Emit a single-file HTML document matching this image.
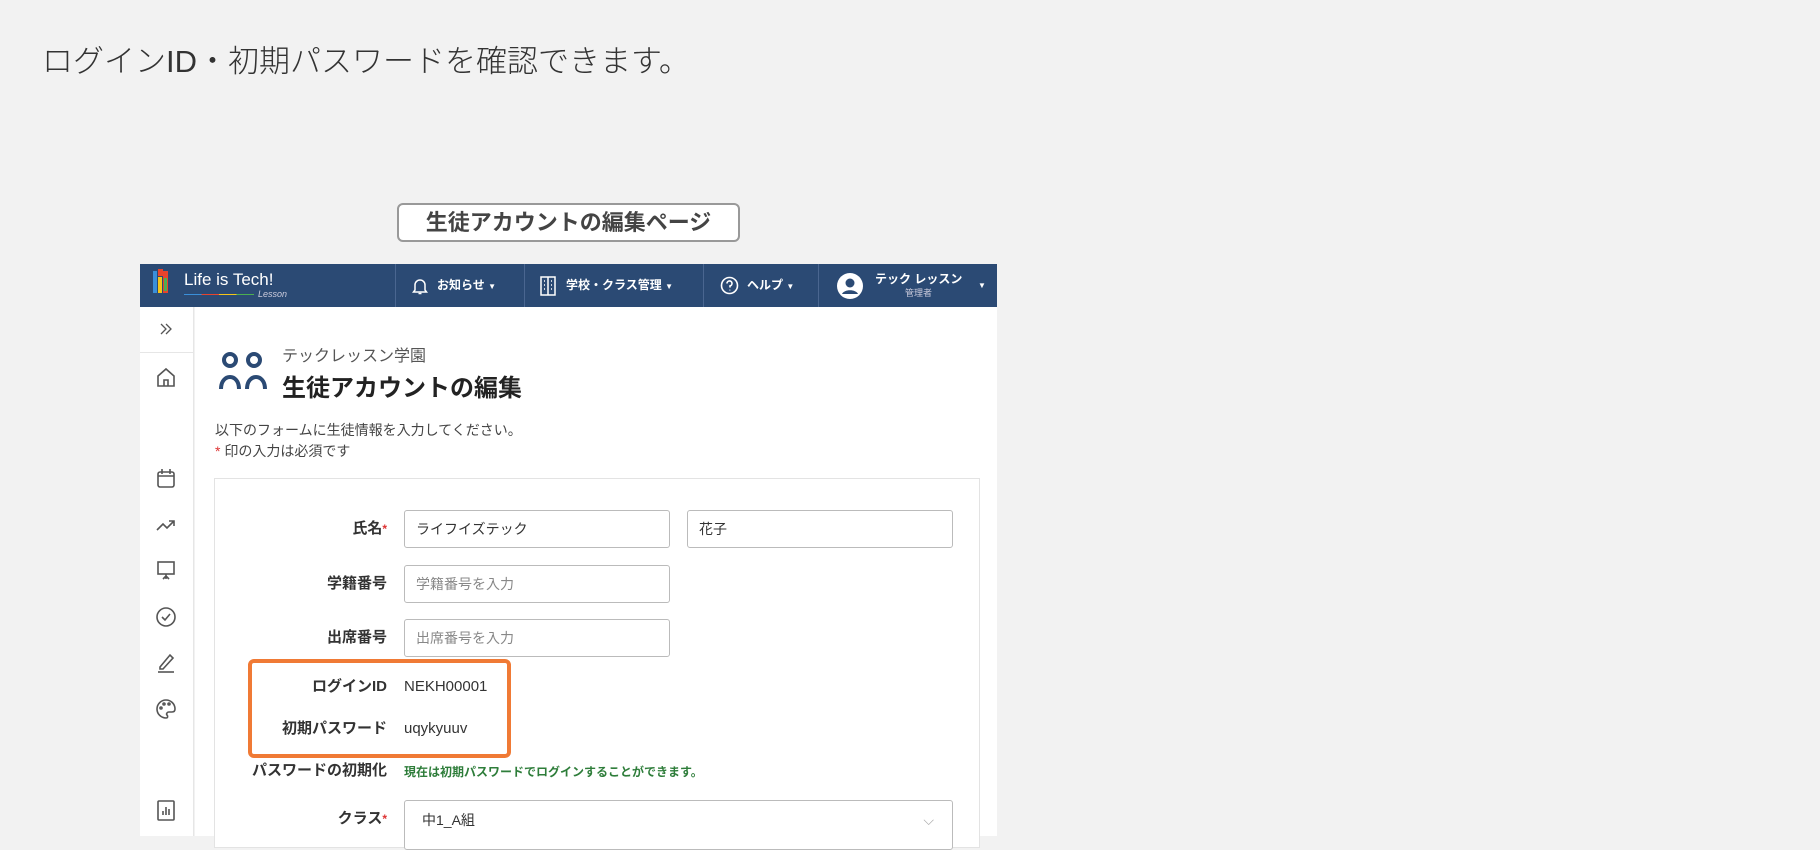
<!DOCTYPE html>
<html><head><meta charset="utf-8"><style>
*{box-sizing:border-box;margin:0;padding:0}
body{width:1820px;height:836px;background:#f2f2f2;font-family:"Liberation Sans","Noto Sans CJK JP",sans-serif;position:relative;overflow:hidden;color:#333}
.abs{position:absolute}
.h1{left:42px;top:36px;font-size:31px;color:#333;font-weight:300;white-space:nowrap}
.tag{left:397px;top:203px;width:343px;height:39px;border:2px solid #999;border-radius:6px;background:#fff;font-size:22px;font-weight:bold;color:#444;text-align:center;line-height:35px}
.nav{left:140px;top:264px;width:857px;height:43px;background:#2b4a74;color:#fff}
.sep{position:absolute;top:0;width:1px;height:43px;background:#4a6690}
.ni{position:absolute;top:0;height:43px;line-height:43px;font-size:12px;font-weight:bold;white-space:nowrap}
.side{left:140px;top:307px;width:54px;height:529px;background:#fff;border-right:1px solid #e6e6e6}
.main{left:195px;top:307px;width:802px;height:529px;background:#fff}
.card{left:214px;top:478px;width:766px;height:370px;border:1px solid #e3e3e3;background:#fff}
.lab{position:absolute;right:1433px;font-size:15px;line-height:20px;font-weight:bold;color:#333;white-space:nowrap;text-align:right}
.val{position:absolute;left:404px;font-size:15px;line-height:20px}
.inp{position:absolute;height:38px;border:1px solid #bbb;border-radius:3px;font-size:14px;line-height:36px;padding-left:11px;color:#333;background:#fff}
.ph{color:#888}
.req{color:#d33;font-size:12px;vertical-align:top}
svg.ic{position:absolute;left:155px}
</style></head><body>
<div class="abs h1">ログインID・初期パスワードを確認できます。</div>
<div class="abs tag">生徒アカウントの編集ページ</div>

<div class="abs nav">
 <svg class="abs" style="left:13px;top:5px" width="16" height="25" viewBox="0 0 16 25"><rect x="0" y="2" width="4" height="22" fill="#3a8fd9"/><rect x="5" y="0" width="5" height="7" fill="#e8442d"/><rect x="5" y="8" width="4" height="16" fill="#f5c518"/><rect x="10" y="2" width="5" height="22" fill="#e8442d"/><rect x="11" y="9" width="3" height="13" fill="#4caf50"/></svg>
 <div class="abs" style="left:44px;top:5px;font-size:17px;line-height:22px">Life is Tech!</div>
 <div class="abs" style="left:44px;top:30px;width:70px;height:1px;background:linear-gradient(90deg,#3a8fd9 25%,#e8442d 25% 50%,#f5c518 50% 75%,#4caf50 75%)"></div>
 <div class="abs" style="left:118px;top:25px;font-size:9px;font-style:italic;color:#ccd">Lesson</div>
 <div class="sep" style="left:255px"></div><div class="sep" style="left:384px"></div><div class="sep" style="left:563px"></div><div class="sep" style="left:678px"></div>
 <svg class="abs" style="left:272px;top:13px" width="16" height="18" viewBox="0 0 16 18" fill="none" stroke="#fff" stroke-width="1.5"><path d="M3 13V8a5 5 0 0 1 10 0v5l1.5 2h-13z"/><path d="M6.5 16.5h3"/></svg>
 <div class="ni" style="left:297px">お知らせ <span style="font-size:8px">▼</span></div>
 <svg class="abs" style="left:400px;top:12px" width="16" height="20" viewBox="0 0 16 20" fill="none" stroke="#fff" stroke-width="1.5"><rect x="1" y="1" width="14" height="18"/><path d="M8 1v18M4 5h1M4 9h1M4 13h1M11 5h1M11 9h1M11 13h1"/></svg>
 <div class="ni" style="left:426px">学校・クラス管理 <span style="font-size:8px">▼</span></div>
 <svg class="abs" style="left:580px;top:12px" width="19" height="19" viewBox="0 0 19 19" fill="none" stroke="#fff" stroke-width="1.6"><circle cx="9.5" cy="9.5" r="8"/><path d="M7 7.5a2.5 2.5 0 1 1 3 2.4v1.6M9.8 13.8v.6"/></svg>
 <div class="ni" style="left:607px">ヘルプ <span style="font-size:8px">▼</span></div>
 <svg class="abs" style="left:696px;top:8px" width="28" height="28" viewBox="0 0 28 28"><circle cx="14" cy="14" r="13" fill="#fff"/><circle cx="14" cy="11" r="4.5" fill="#2b4a74"/><path d="M6 22c2-5 14-5 16 0" fill="#2b4a74"/></svg>
 <div class="ni" style="left:735px;top:-6px;font-size:12px">テック レッスン</div>
 <div class="ni" style="left:765px;top:8px;font-size:9px;color:#ccd;font-weight:normal">管理者</div>
 <div class="ni" style="left:838px;font-size:8px">▼</div>
</div>

<div class="abs side">
 <div style="height:46px;border-bottom:1px solid #e6e6e6"></div>
</div>
<svg class="abs" style="left:158px;top:321px" width="16" height="16" viewBox="0 0 16 16" fill="none" stroke="#555" stroke-width="1.3"><path d="M3 3l5 5-5 5M8 3l5 5-5 5"/></svg>
<svg class="ic" style="top:366px" width="22" height="22" viewBox="0 0 22 22" fill="none" stroke="#555" stroke-width="1.6"><path d="M3 10L11 3l8 7v10H3z"/><path d="M9 20v-6h4v6"/></svg>
<svg class="ic" style="top:467px" width="22" height="22" viewBox="0 0 22 22" fill="none" stroke="#555" stroke-width="1.6"><rect x="3" y="5" width="16" height="15" rx="2"/><path d="M3 9h16M7 2v5M15 2v5"/></svg>
<svg class="ic" style="top:513px" width="22" height="22" viewBox="0 0 22 22" fill="none" stroke="#555" stroke-width="1.6"><path d="M2 17l6-6 4 4 7-7M14 8h5v5"/></svg>
<svg class="ic" style="top:559px" width="22" height="22" viewBox="0 0 22 22" fill="none" stroke="#555" stroke-width="1.6"><rect x="3" y="3" width="16" height="12"/><path d="M11 15v5M8 20l3-3 3 3"/></svg>
<svg class="ic" style="top:606px" width="22" height="22" viewBox="0 0 22 22" fill="none" stroke="#555" stroke-width="1.6"><circle cx="11" cy="11" r="9"/><path d="M7 11l3 3 5-6"/></svg>
<svg class="ic" style="top:652px" width="22" height="22" viewBox="0 0 22 22" fill="none" stroke="#555" stroke-width="1.6"><path d="M5 15L15 3l3 3-10 11H5z"/><path d="M3 20h16"/></svg>
<svg class="ic" style="top:698px" width="22" height="22" viewBox="0 0 22 22" fill="none" stroke="#555" stroke-width="1.6"><path d="M11 2a9 9 0 1 0 0 18c2 0 2-2 1-3s0-3 2-3h3c2 0 3-1 3-3 0-5-4-9-9-9z"/><circle cx="6" cy="10" r="1"/><circle cx="9" cy="6" r="1"/><circle cx="14" cy="6" r="1"/></svg>
<svg class="ic" style="top:799px" width="22" height="22" viewBox="0 0 22 22" fill="none" stroke="#555" stroke-width="1.6"><rect x="3" y="2" width="16" height="19" rx="1"/><path d="M8 16v-4M11 16V8M14 16v-6"/></svg>

<div class="abs main"></div>
<svg class="abs" style="left:219px;top:351px" width="48" height="40" viewBox="0 0 48 40" fill="none" stroke="#2b4a74" stroke-width="4"><circle cx="11" cy="9" r="6"/><circle cx="35" cy="9" r="6"/><path d="M2 38c0-16 18-16 18 0M28 38c0-16 18-16 18 0"/></svg>
<div class="abs" style="left:282px;top:342px;font-size:16px;color:#555">テックレッスン学園</div>
<div class="abs" style="left:282px;top:368px;font-size:24px;font-weight:bold;color:#222">生徒アカウントの編集</div>
<div class="abs" style="left:215px;top:420px;font-size:14px;color:#444">以下のフォームに生徒情報を入力してください。</div>
<div class="abs" style="left:215px;top:441px;font-size:14px;color:#444"><span style="color:#d33">*</span> 印の入力は必須です</div>

<div class="abs card"></div>
<div class="lab" style="top:519px">氏名<span class="req">*</span></div>
<div class="inp" style="left:404px;top:510px;width:266px">ライフイズテック</div>
<div class="inp" style="left:687px;top:510px;width:266px">花子</div>
<div class="lab" style="top:574px">学籍番号</div>
<div class="inp ph" style="left:404px;top:565px;width:266px">学籍番号を入力</div>
<div class="lab" style="top:628px">出席番号</div>
<div class="inp ph" style="left:404px;top:619px;width:266px">出席番号を入力</div>
<div class="abs" style="left:248px;top:659px;width:263px;height:99px;border:4px solid #f07a35;border-radius:6px"></div>
<div class="lab" style="top:677px">ログインID</div>
<div class="val" style="top:677px">NEKH00001</div>
<div class="lab" style="top:719px">初期パスワード</div>
<div class="val" style="top:719px">uqykyuuv</div>
<div class="lab" style="top:761px">パスワードの初期化</div>
<div class="abs" style="left:404px;top:763px;font-size:12px;font-weight:bold;color:#2e7d3a">現在は初期パスワードでログインすることができます。</div>
<div class="lab" style="top:809px">クラス<span class="req">*</span></div>
<div class="inp" style="left:404px;top:800px;width:549px;height:50px;line-height:38px;padding-left:17px">中1_A組<span style="position:absolute;right:18px;color:#aaa">⌵</span></div>
</body></html>
